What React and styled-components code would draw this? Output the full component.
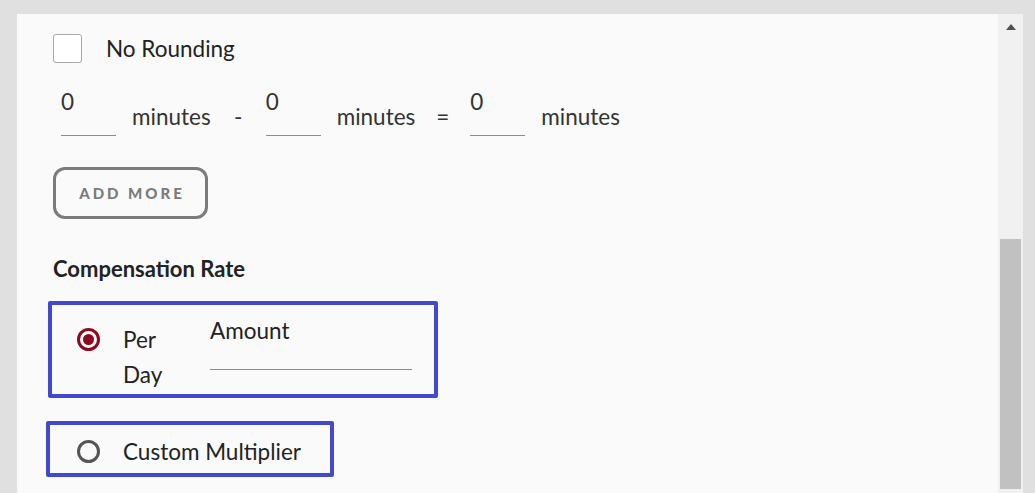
import React from "react";
import styled, { createGlobalStyle } from "styled-components";

const GlobalStyle = createGlobalStyle`
  html, body {
    margin: 0;
    padding: 0;
    background-color: #e0e0e0;
    font-family: "Lato", "Open Sans", sans-serif;
    overflow: hidden;
  }
`;

const Frame = styled.div`
  display: flex;
  height: 479px;
  margin: 14px 12px 0 17px;
  overflow: hidden;
`;

const Content = styled.div`
  flex: 1;
  background-color: #fafafa;
  padding: 20px 0 0 36px;
  color: #222;
`;

const ScrollTrack = styled.div`
  width: 25px;
  display: flex;
  flex-direction: column;
  align-items: center;
  background-color: #f1f1f1;
`;

const ScrollArrow = styled.div`
  margin-top: 10px;
  width: 0;
  height: 0;
  border-left: 5.5px solid transparent;
  border-right: 5.5px solid transparent;
  border-bottom: 6px solid #505050;
`;

const ScrollThumb = styled.div`
  margin-top: 209px;
  width: 21px;
  height: 250px;
  background-color: #c1c1c1;
`;

const CheckRow = styled.div`
  display: flex;
  align-items: center;
  gap: 24px;
  height: 29px;
  font-size: 22.5px;
`;

const CheckBox = styled.div`
  width: 27px;
  height: 27px;
  border: 1px solid #a8a8a8;
  border-radius: 3px;
  background-color: #fff;
`;

const FormulaRow = styled.div`
  display: flex;
  align-items: flex-end;
  margin-top: 26px;
  padding-left: 8px;
  font-size: 22.5px;
  line-height: 25px;
  color: #333;
`;

const Field = styled.div`
  width: ${(p) => p.width || 55}px;
  height: ${(p) => p.height || 46}px;
  border-bottom: 1px solid #8c8c8c;
  color: #333;
`;

const Unit = styled.span`
  margin-left: 16px;
  padding-bottom: 7px;
`;

const Operator = styled.span`
  width: 55px;
  text-align: center;
  padding-bottom: 7px;
`;

const AddButton = styled.button`
  margin-top: 31px;
  width: 155px;
  height: 52px;
  border: 3px solid #7b7b7b;
  border-radius: 12px;
  background: transparent;
  color: #7b7b7b;
  font-family: "Lato", sans-serif;
  font-weight: 900;
  font-size: 15px;
  letter-spacing: 3px;
  padding: 0 0 0 3px;
`;

const Heading = styled.div`
  margin-top: 37px;
  font-size: 22px;
  line-height: 25px;
  font-weight: 700;
  color: #222;
`;

const Option = styled.div`
  display: flex;
  align-items: ${(p) => (p.center ? "center" : "flex-start")};
  width: ${(p) => p.width}px;
  height: ${(p) => p.height}px;
  box-sizing: border-box;
  border: 4px solid #4349cf;
  border-radius: 2px;
  margin-left: ${(p) => p.shift || 0}px;
  margin-top: ${(p) => p.top}px;
  padding: ${(p) => p.pad};
  font-size: 22.5px;
`;

const Radio = styled.div`
  flex: none;
  width: 23px;
  height: 23px;
  box-sizing: border-box;
  border-radius: 50%;
  border: 3px solid ${(p) => (p.checked ? "#8c0a1e" : "#555")};
  display: flex;
  align-items: center;
  justify-content: center;
  margin-top: ${(p) => p.top || 0}px;

  &::after {
    content: "";
    display: ${(p) => (p.checked ? "block" : "none")};
    width: 11px;
    height: 11px;
    border-radius: 50%;
    background-color: #8c0a1e;
  }
`;

const OptionLabel = styled.div`
  margin-left: 23px;
  width: ${(p) => (p.narrow ? "64px" : "auto")};
  line-height: ${(p) => (p.narrow ? "35px" : "25px")};
  color: #222;
`;

const AmountField = styled.div`
  margin-left: 23px;
  margin-top: -4px;
  width: 202px;
  height: 51px;
  border-bottom: 1px solid #8c8c8c;
  line-height: 25px;
`;

export default function App() {
  return (
    <>
      <GlobalStyle />
      <Frame>
        <Content>
          <CheckRow>
            <CheckBox />
            <span>No Rounding</span>
          </CheckRow>
          <FormulaRow>
            <Field>0</Field>
            <Unit>minutes</Unit>
            <Operator>-</Operator>
            <Field>0</Field>
            <Unit>minutes</Unit>
            <Operator>=</Operator>
            <Field>0</Field>
            <Unit>minutes</Unit>
          </FormulaRow>
          <AddButton>ADD MORE</AddButton>
          <Heading>Compensation Rate</Heading>
          <Option width={390} height={97} top={20} shift={-5} pad="17px 21px 2px 25px">
            <Radio checked top={6} />
            <OptionLabel narrow>Per Day</OptionLabel>
            <AmountField>Amount</AmountField>
          </Option>
          <Option center width={288} height={56} top={23} shift={-7} pad="4px 0 0 27px">
            <Radio />
            <OptionLabel>Custom Multiplier</OptionLabel>
          </Option>
        </Content>
        <ScrollTrack>
          <ScrollArrow />
          <ScrollThumb />
        </ScrollTrack>
      </Frame>
    </>
  );
}
